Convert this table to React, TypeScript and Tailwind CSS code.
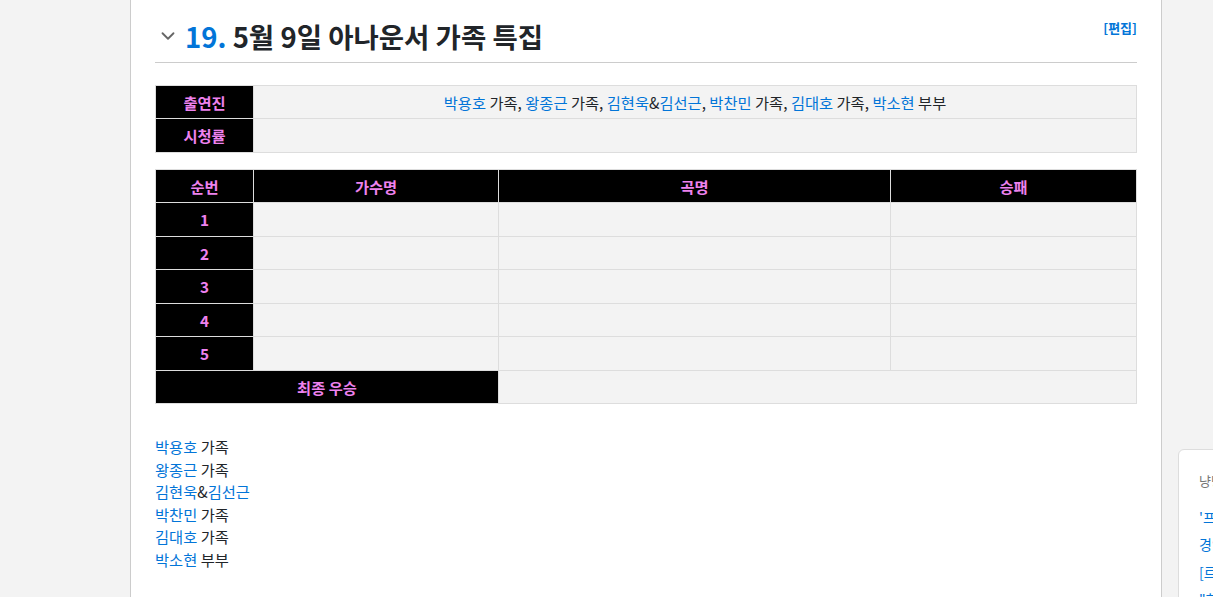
import { ChevronDown } from 'lucide-react';

const font = { fontFamily: '"Noto Sans CJK KR", "Noto Sans", sans-serif' };

type Cast = { name: string; tail: string; partner?: string };

const cast: Cast[] = [
	{ name: '박용호', tail: '가족' },
	{ name: '왕종근', tail: '가족' },
	{ name: '김현욱', tail: '', partner: '김선근' },
	{ name: '박찬민', tail: '가족' },
	{ name: '김대호', tail: '가족' },
	{ name: '박소현', tail: '부부' },
];

function Link({ children }: { children: React.ReactNode }) {
	return <a className="text-[#0275d8] no-underline">{children}</a>;
}

function CastName({ c }: { c: Cast }) {
	if (c.partner) {
		return (
			<>
				<Link>{c.name}</Link>&amp;<Link>{c.partner}</Link>
			</>
		);
	}
	return (
		<>
			<Link>{c.name}</Link> {c.tail}
		</>
	);
}

const headCell =
	'bg-black text-[#ee82ee] font-bold text-center border border-[#dddddd] p-0';
const bodyCell = 'bg-[#f3f3f3] border border-[#dddddd] p-0';

// row heights alternate so the rows land on the same pixel rows as the original
const rowH = ['h-[34px]', 'h-[33px]', 'h-[34px]', 'h-[33px]', 'h-[34px]'];

export default function App() {
	return (
		<div
			className="flex h-[597px] w-[1213px] overflow-hidden bg-[#f3f3f3] text-[#212529]"
			style={font}>
			<div className="w-[130px] shrink-0" />
			<main className="w-[1032px] shrink-0 border-x border-[#cccccc] bg-white px-[24px]">
				<div className="flex items-start justify-between border-b border-[#cccccc] pt-[17px] pb-[7px]">
					<h2 className="flex items-center gap-[6px] text-[27.5px] font-bold leading-[38px]">
						<ChevronDown className="ml-[2px] h-[22px] w-[22px] text-[#666666]" strokeWidth={2} />
						<span>
							<span className="text-[#0275d8]">19.</span> 5월 9일 아나운서 가족 특집
						</span>
					</h2>
					<a className="mt-[1px] text-[13px] font-bold text-[#0275d8]">[편집]</a>
				</div>

				<table className="mt-[22px] w-full border-collapse text-[15.3px]">
					<tbody>
						<tr>
							<td className={`${headCell} h-[33px] w-[98px]`}>출연진</td>
							<td className={`${bodyCell} text-center`}>
								{cast.map((c, i) => (
									<span key={c.name}>
										<CastName c={c} />
										{i < cast.length - 1 ? ', ' : ''}
									</span>
								))}
							</td>
						</tr>
						<tr>
							<td className={`${headCell} h-[34px]`}>시청률</td>
							<td className={bodyCell}></td>
						</tr>
					</tbody>
				</table>

				<table className="mt-[16px] w-full border-collapse text-[15.3px]">
					<tbody>
						<tr>
							<td className={`${headCell} h-[33px] w-[98px]`}>순번</td>
							<td className={`${headCell} w-[245px]`}>가수명</td>
							<td className={`${headCell} w-[392px]`}>곡명</td>
							<td className={headCell}>승패</td>
						</tr>
						{[1, 2, 3, 4, 5].map((n, i) => (
							<tr key={n}>
								<td className={`${headCell} ${rowH[i]}`}>{n}</td>
								<td className={bodyCell}></td>
								<td className={bodyCell}></td>
								<td className={bodyCell}></td>
							</tr>
						))}
						<tr>
							<td colSpan={2} className={`${headCell} h-[33px]`}>
								최종 우승
							</td>
							<td colSpan={2} className={bodyCell}></td>
						</tr>
					</tbody>
				</table>

				<ul className="mt-[31px] text-[15.3px] leading-[22.6px]">
					{cast.map((c) => (
						<li key={c.name}>
							<CastName c={c} />
						</li>
					))}
				</ul>
			</main>
			<aside className="shrink-0 pl-[16px] pt-[449px]">
				<div className="w-[260px] rounded-[6px] border border-[#dddddd] bg-white px-[20px] pt-[17px] text-[14px] leading-[27.5px]">
					<div className="text-[#777777] text-[13px]">냥냥 블로그</div>
					<div className="mt-[9px] text-[#0275d8]">
						<div>'프로그램' 관련 소식</div>
						<div>경연 결과 발표</div>
						<div>[르포] 현장 이야기</div>
						<div>"하루" 특집</div>
					</div>
				</div>
			</aside>
		</div>
	);
}
